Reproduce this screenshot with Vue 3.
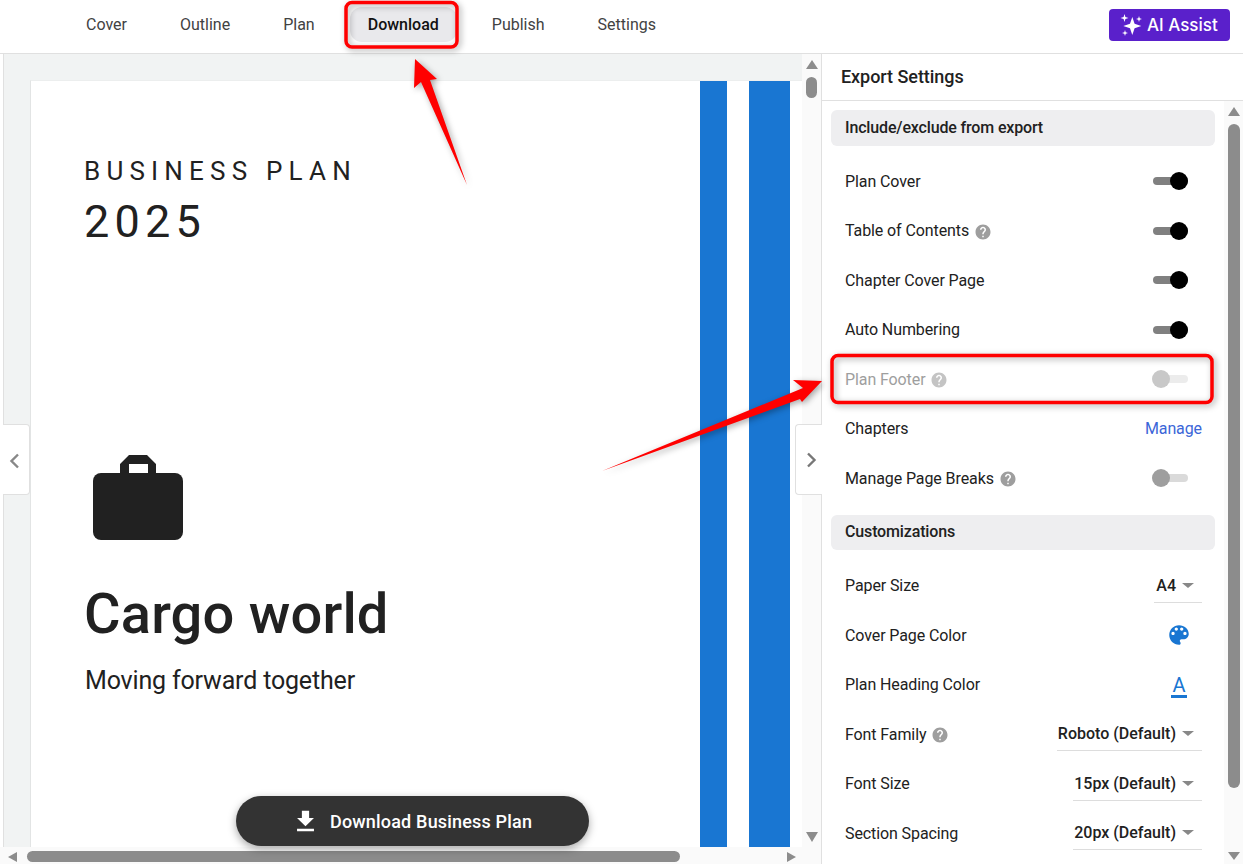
<template>
  <div class="app">
    <header class="topbar">
      <nav class="tabs">
        <a v-for="t in tabs" :key="t" class="tab" :class="{ active: t === 'Download' }">{{ t }}</a>
      </nav>
      <button class="ai-btn">
        <svg width="24" height="24" viewBox="0 0 24 24" fill="#fff">
          <path d="M12.300 4l2.300 6.700 6.700 2.300-6.700 2.300-2.300 6.700-2.300-6.700L3.300 13l6.700-2.300z" />
          <path d="M4.500 1l.9 3.100 3.100.9-3.100.9-.9 3.100-.9-3.100L.5 5l3.100-.9z" />
          <path d="M19 3l.7 2.300 2.300.7-2.300.7-.7 2.300-.7-2.300L16 6l2.300-.7z" />
          <path d="M5 17l.7 2.300 2.300.7-2.300.7L5 23l-.7-2.300L2 20l2.300-.7z" />
        </svg>
        AI Assist
      </button>
    </header>

    <div class="main">
      <section class="left">
        <div class="left-top">
          <div class="strip"></div>
          <div class="viewport">
            <div class="page">
              <div class="cover">
                <div class="kicker">BUSINESS PLAN</div>
                <div class="year">2025</div>
                <svg class="case" width="90" height="85" viewBox="0 0 90 85" fill="#212121">
                  <rect x="0" y="18" width="90" height="67" rx="8" />
                  <path d="M27 18V9l9-9h18l9 9v9h-8V9H36v9z" />
                </svg>
                <div class="company">Cargo world</div>
                <div class="tagline">Moving forward together</div>
              </div>
              <div class="stripe wide-a"></div>
              <div class="stripe wide-b"></div>
            </div>
          </div>
          <div class="vbar">
            <span class="tri up"></span>
            <span class="vthumb"></span>
            <span class="tri down"></span>
          </div>
        </div>
        <div class="hbar">
          <span class="tri lf"></span>
          <span class="hthumb"></span>
          <span class="tri rt"></span>
        </div>

        <div class="handle handle-left">
          <svg width="12" height="18" viewBox="0 0 12 18" fill="none" stroke="#888" stroke-width="2.400">
            <path d="M10 2.500L3.500 9l6.500 6.500" />
          </svg>
        </div>
        <div class="handle handle-right">
          <svg width="12" height="18" viewBox="0 0 12 18" fill="none" stroke="#777" stroke-width="2.400">
            <path d="M2 2.500L8.500 9 2 15.500" />
          </svg>
        </div>

        <button class="download">
          <svg width="29" height="29" viewBox="0 0 24 24" fill="#fff">
            <path d="M19 9h-4V3H9v6H5l7 7 7-7zM5 18v2h14v-2H5z" />
          </svg>
          Download Business Plan
        </button>
      </section>

      <aside class="right">
        <div class="right-head">Export Settings</div>
        <div class="right-body">
          <div class="settings">
            <div class="group-head">Include/exclude from export</div>
            <div class="rows first">
              <div v-for="r in exportRows" :key="r.label" class="row" :class="{ disabled: r.disabled }">
                <span class="label">
                  {{ r.label }}
                  <svg v-if="r.help" class="help" width="18" height="18" viewBox="0 0 24 24">
                    <path :d="helpPath" />
                  </svg>
                </span>
                <a v-if="r.link" class="link">{{ r.link }}</a>
                <span v-else class="toggle" :class="{ on: r.on }"><i></i></span>
              </div>
            </div>

            <div class="group-head second">Customizations</div>
            <div class="rows custom">
              <div v-for="r in customRows" :key="r.label" class="row">
                <span class="label">
                  {{ r.label }}
                  <svg v-if="r.help" class="help" width="18" height="18" viewBox="0 0 24 24">
                    <path :d="helpPath" />
                  </svg>
                </span>
                <span v-if="r.value" class="select" :style="{ width: r.width + 'px' }">
                  {{ r.value }}<i class="caret"></i>
                </span>
                <svg v-else-if="r.palette" class="palette" width="26" height="26" viewBox="0 0 24 24" fill="#1976d2">
                  <path d="M12 3c-4.970 0-9 4.030-9 9s4.030 9 9 9c.830 0 1.500-.670 1.500-1.500 0-.390-.150-.740-.390-1.010-.230-.260-.380-.610-.380-.990 0-.830.670-1.500 1.500-1.500H16c2.760 0 5-2.240 5-5 0-4.420-4.030-8-9-8zm-5.500 9c-.830 0-1.500-.670-1.500-1.500S5.670 9 6.500 9 8 9.670 8 10.500 7.330 12 6.500 12zm3-4C8.670 8 8 7.330 8 6.500S8.670 5 9.500 5s1.500.670 1.500 1.500S10.330 8 9.500 8zm5 0c-.830 0-1.500-.670-1.500-1.500S13.670 5 14.500 5s1.500.670 1.500 1.500S15.330 8 14.500 8zm3 4c-.830 0-1.500-.670-1.500-1.500S16.670 9 17.500 9s1.500.670 1.500 1.500-.670 1.500-1.500 1.500z" />
                </svg>
                <span v-else class="font-color">A</span>
              </div>
            </div>
          </div>
          <div class="vbar panel-bar">
            <span class="tri up"></span>
            <span class="pthumb"></span>
            <span class="tri down"></span>
          </div>
        </div>
      </aside>
    </div>

    <!-- red annotations drawn on top of the screenshot -->
    <svg class="marks" width="1243" height="864" viewBox="0 0 1243 864">
      <rect x="346" y="2.500" width="111" height="44.500" rx="6" fill="none" stroke="#f00" stroke-width="3.500" />
      <rect x="832" y="355.500" width="380" height="47" rx="6" fill="none" stroke="#f00" stroke-width="3.500" />
      <polygon points="467,185 421,82 414,88 415,59 437,79 430,80" fill="#f00" />
      <polygon points="602,471 803,388 793,380 822,381 802,402 800,399" fill="#f00" />
    </svg>
  </div>
</template>

<script setup>
const tabs = ["Cover", "Outline", "Plan", "Download", "Publish", "Settings"];

const helpPath =
  "M12 2C6.480 2 2 6.480 2 12s4.480 10 10 10 10-4.480 10-10S17.520 2 12 2zm1 17h-2v-2h2v2zm2.070-7.750l-.900.920C13.450 12.900 13 13.500 13 15h-2v-.500c0-1.100.450-2.100 1.170-2.830l1.240-1.260c.370-.360.590-.860.590-1.410 0-1.100-.900-2-2-2s-2 .900-2 2H8c0-2.210 1.790-4 4-4s4 1.790 4 4c0 .880-.360 1.680-.930 2.250z";

const exportRows = [
  { label: "Plan Cover", on: true },
  { label: "Table of Contents", on: true, help: true },
  { label: "Chapter Cover Page", on: true },
  { label: "Auto Numbering", on: true },
  { label: "Plan Footer", help: true, disabled: true },
  { label: "Chapters", link: "Manage" },
  { label: "Manage Page Breaks", help: true },
];

const customRows = [
  { label: "Paper Size", value: "A4", width: 48 },
  { label: "Cover Page Color", palette: true },
  { label: "Plan Heading Color" },
  { label: "Font Family", help: true, value: "Roboto (Default)", width: 145 },
  { label: "Font Size", value: "15px (Default)", width: 129 },
  { label: "Section Spacing", value: "20px (Default)", width: 129 },
];
</script>

<style>
html,
body {
  margin: 0;
  background: #fff;
}
</style>

<style scoped>
.app {
  position: relative;
  width: 1243px;
  height: 864px;
  overflow: hidden;
  display: flex;
  flex-direction: column;
  font-family: Roboto, "Liberation Sans", sans-serif;
  color: #212121;
  background: #fff;
}

.topbar {
  height: 53px;
  flex: none;
  display: flex;
  align-items: center;
  justify-content: space-between;
  border-bottom: 1px solid #e0e0e0;
  padding: 0 13px 0 68px;
}
.tabs {
  display: flex;
  gap: 17px;
  margin-top: -5px;
}
.tab {
  padding: 0 18px;
  height: 35px;
  line-height: 35px;
  font-size: 16px;
  color: #424242;
  border-radius: 12px;
}
.tab.active {
  background: #e9e9ec;
  color: #111;
  font-weight: 500;
}
.ai-btn {
  width: 121px;
  height: 32px;
  margin-top: -4px;
  border: 0;
  border-radius: 4px;
  background: #5a20cb;
  color: #fff;
  font: 500 17px Inter, sans-serif;
  display: flex;
  align-items: center;
  gap: 3px;
  padding: 0 0 0 11px;
}

.main {
  flex: 1;
  display: flex;
  min-height: 0;
}
.left {
  position: relative;
  width: 821px;
  flex: none;
  display: flex;
  flex-direction: column;
  border-right: 1px solid #e0e0e0;
}
.left-top {
  flex: 1;
  display: flex;
  min-height: 0;
}
.strip {
  width: 3px;
  flex: none;
  border-right: 1px solid #e0e0e0;
}
.viewport {
  flex: 1;
  background: #f1f3f3;
  padding: 26px 0 0 26px;
  overflow: hidden;
  min-width: 0;
}
.page {
  height: 100%;
  background: #fff;
  display: flex;
  border-left: 1px solid #e2e4e4;
  border-top: 1px solid #eceeee;
  box-sizing: border-box;
}
.cover {
  width: 669px;
  flex: none;
  padding-left: 53px;
  box-sizing: border-box;
}
.kicker {
  margin-top: 72px;
  font-size: 26px;
  line-height: 36px;
  font-weight: 400;
  letter-spacing: 6.200px;
}
.year {
  margin-top: 7px;
  font-size: 45px;
  line-height: 52px;
  font-weight: 400;
  letter-spacing: 5.200px;
}
.case {
  display: block;
  margin: 207px 0 0 9px;
}
.company {
  margin-top: 39px;
  font-size: 56px;
  line-height: 70px;
  font-weight: 500;
  letter-spacing: 0.2px;
}
.tagline {
  margin: 15px 0 0 1px;
  font-size: 25px;
  line-height: 34px;
  letter-spacing: -0.17px;
}
.stripe {
  height: 100%;
  background: #1976d2;
  flex: none;
}
.wide-a {
  width: 27px;
}
.wide-b {
  width: 41px;
  margin-left: 22px;
}

.vbar {
  width: 19px;
  flex: none;
  background: #fafafa;
  display: flex;
  flex-direction: column;
  align-items: center;
}
.tri {
  width: 0;
  height: 0;
  flex: none;
}
.tri.up {
  margin-top: 6px;
  border: 6.500px solid transparent;
  border-top: 0;
  border-bottom: 9px solid #8c8c8c;
}
.tri.down {
  margin-top: auto;
  margin-bottom: 5px;
  border: 6.500px solid transparent;
  border-bottom: 0;
  border-top: 10px solid #8c8c8c;
}
.vthumb {
  width: 11px;
  height: 21px;
  margin-top: 8px;
  background: #8c8c8c;
  border-radius: 6px;
}

.hbar {
  height: 17px;
  flex: none;
  box-sizing: border-box;
  padding: 2px 25px 0 8px;
  background: #fafafa;
  display: flex;
  align-items: center;
}
.hbar .tri {
  border: 5.500px solid transparent;
}
.tri.lf {
  border-left: 0 !important;
  border-right: 9px solid #8c8c8c !important;
}
.tri.rt {
  margin-left: auto;
  border-right: 0 !important;
  border-left: 9px solid #8c8c8c !important;
}
.hthumb {
  width: 653px;
  height: 11px;
  margin-left: 10px;
  background: #8c8c8c;
  border-radius: 6px;
}

.handle {
  position: absolute;
  top: 370px;
  height: 71px;
  box-sizing: border-box;
  background: #fff;
  border: 1px solid #e0e0e0;
  display: flex;
  align-items: center;
  justify-content: center;
}
.handle-left {
  left: 3px;
  width: 27px;
  padding: 2px 5px 0 0;
  border-left: 0;
  border-radius: 0 4px 4px 0;
}
.handle-right {
  left: 795px;
  width: 27px;
  padding-left: 5px;
  border-right: 0;
  border-radius: 4px 0 0 4px;
}

.download {
  position: absolute;
  left: 236px;
  top: 742px;
  width: 353px;
  height: 50px;
  border: 0;
  border-radius: 25px;
  background: #333;
  color: #fff;
  font: 500 18px Roboto, sans-serif;
  letter-spacing: 0.18px;
  display: flex;
  align-items: center;
  gap: 10px;
  padding: 0 0 0 55px;
  box-shadow: 0 3px 8px rgba(0, 0, 0, 0.35);
}

.right {
  flex: 1;
  display: flex;
  flex-direction: column;
  min-width: 0;
}
.right-head {
  height: 46px;
  flex: none;
  line-height: 46px;
  padding-left: 19px;
  font-size: 18px;
  font-weight: 500;
  letter-spacing: -0.05px;
  border-bottom: 1px solid #e0e0e0;
}
.right-body {
  flex: 1;
  display: flex;
  min-height: 0;
}
.settings {
  flex: 1;
  min-width: 0;
  padding: 9px 9px 0 9px;
}
.group-head {
  height: 36px;
  line-height: 36px;
  padding-left: 14px;
  background: #eeeef0;
  border-radius: 6px;
  font-size: 16px;
  font-weight: 500;
  letter-spacing: -0.15px;
}
.group-head.second {
  height: 35px;
  line-height: 33px;
}
.rows {
  padding: 10.500px 13px 12px 14px;
}
.rows.custom {
  padding-top: 11px;
}
.row {
  height: 49.500px;
  display: flex;
  align-items: center;
  justify-content: space-between;
  font-size: 16px;
  letter-spacing: -0.1px;
}
.label {
  display: flex;
  align-items: center;
  gap: 5px;
}
.help {
  fill: #9e9e9e;
  margin-top: 2px;
}
.link {
  color: #3b66d8;
}
.toggle {
  position: relative;
  width: 35px;
  height: 8px;
  margin-right: 14px;
  border-radius: 4px;
  background: #dadada;
}
.toggle i {
  position: absolute;
  left: -1px;
  top: -5px;
  width: 18px;
  height: 18px;
  border-radius: 50%;
  background: #9e9e9e;
}
.toggle.on {
  background: #808080;
}
.toggle.on i {
  left: auto;
  right: 0;
  background: #000;
}
.row.disabled .label {
  color: #9e9e9e;
}
.row.disabled .help {
  fill: #c4c4c4;
}
.row.disabled .toggle {
  background: #ececec;
}
.row.disabled .toggle i {
  background: #c8c8c8;
}
.select {
  height: 30px;
  box-sizing: border-box;
  margin-top: 4px;
  padding-bottom: 4px;
  border-bottom: 1px solid #ddd;
  display: flex;
  align-items: center;
  justify-content: flex-end;
  font-weight: 500;
  letter-spacing: 0;
  color: #212121;
}
.caret {
  margin: 0 8px 0 6px;
  border: 6px solid transparent;
  border-bottom: 0;
  border-top: 5px solid #888;
}
.palette {
  margin-right: 10px;
}
.font-color {
  width: 16px;
  margin: 4px 15px 0 0;
  text-align: center;
  color: #1976d2;
  font-size: 20px;
  line-height: 19px;
  border-bottom: 3px solid #1976d2;
}

.panel-bar {
  width: 19px;
}
.panel-bar .tri.down {
  margin-bottom: 4px;
  border-top-width: 8px;
}
.pthumb {
  width: 12px;
  height: 664px;
  margin-top: 8px;
  background: #8c8c8c;
  border-radius: 6px;
}

.marks {
  position: absolute;
  left: 0;
  top: 0;
  pointer-events: none;
  filter: drop-shadow(2px 2px 3px rgba(0, 0, 0, 0.35));
}
</style>
